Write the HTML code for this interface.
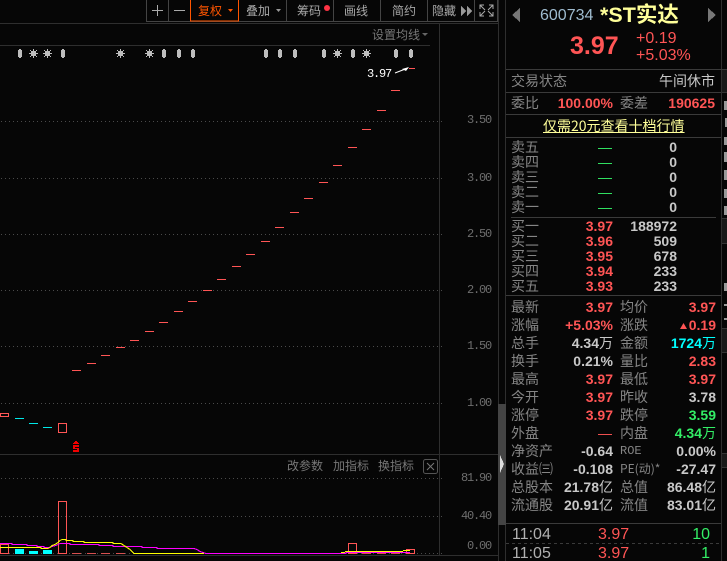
<!DOCTYPE html>
<html lang="zh"><head><meta charset="utf-8"><title>600734</title>
<style>
html,body{margin:0;padding:0;width:727px;height:561px;overflow:hidden;background:#060606}
body{position:relative;font-family:"Liberation Sans","WenQuanYi Zen Hei","Noto Sans CJK SC",sans-serif}
svg{position:absolute;left:0;top:0}
.t{position:absolute;white-space:nowrap;line-height:16px;height:16px;font-size:14px}
.c{font-family:"WenQuanYi Zen Hei","Noto Sans CJK SC",sans-serif;font-weight:normal}
.l{color:#858585;left:511px;font-family:"WenQuanYi Zen Hei","Noto Sans CJK SC",sans-serif}
.m{color:#858585;left:620px;font-family:"WenQuanYi Zen Hei","Noto Sans CJK SC",sans-serif}
.v{font-weight:bold;font-size:14px}
.r{color:#ff5555}.w{color:#c8c8c8}.g{color:#33ee66}.y{color:#ffff99}.b{color:#00ffff}
.a{color:#6e6e6e;font-family:"Liberation Mono",monospace;font-size:12px;letter-spacing:-1.2px;left:460px;width:31px;text-align:right}
.k{color:#a8a8a8;font-size:12px;top:3px;font-family:"WenQuanYi Zen Hei","Noto Sans CJK SC",sans-serif}
.s{color:#777;font-size:12px;font-family:"WenQuanYi Zen Hei","Noto Sans CJK SC",sans-serif}
</style></head><body>
<svg width="727" height="561" viewBox="0 0 727 561" shape-rendering="crispEdges">
<!-- chart frame -->
<g fill="#2e2e2e">
<rect x="0" y="23" width="498" height="1"/><rect x="0" y="45" width="430" height="1"/>
<rect x="0" y="454" width="498" height="1"/><rect x="0" y="555" width="498" height="1"/>
<rect x="439" y="23" width="1" height="532"/>
<rect x="498" y="0" width="1" height="561"/><rect x="505" y="0" width="1" height="561"/>
<rect x="721" y="0" width="1" height="561"/>
</g>
<!-- grid -->
<g stroke="#4a4a4a" stroke-dasharray="1 3" stroke-width="1">
<path d="M1 121.500H443M1 178.500H443M1 234.500H443M1 290.500H443M1 346.500H443M1 403.500H443M1 478.500H443M1 516.500H443M1 553.500H443"/>
</g>
<!-- toolbar -->
<g fill="none" stroke="#444">
<path d="M146.500 0V21.500H498M168.500 0V21M286.500 0V21M333.500 0V21M380.500 0V21M427.500 0V21M474.500 0V21M497.500 0V21"/>
</g>
<rect x="190.500" y="-2" width="48" height="23" fill="#060606" stroke="#ff5500"/>
<path d="M152 10.500h11M157.500 5v11" stroke="#aaa" fill="none"/>
<path d="M174 10.500h11" stroke="#aaa" fill="none"/>
<path d="M228 9h5l-2.500 3z" fill="#ff5500" shape-rendering="auto"/>
<path d="M276 9h5l-2.500 3z" fill="#999" shape-rendering="auto"/>
<circle cx="327" cy="8" r="3" fill="#ff3344" shape-rendering="auto"/>
<path d="M461 6v10l5-5zM467 6v10l5-5z" fill="#999"/>
<path d="M480 9V5h4M480 5l5 5M493 9V5h-4M493 5l-5 5M480 12v4h4M480 16l5-5M493 12v4h-4M493 16l-5-5" stroke="#aaa" fill="none" shape-rendering="auto"/>
<path d="M422 33h6l-3 3z" fill="#666" shape-rendering="auto"/>
<!-- markers -->
<g fill="#bdbdbd">
<path d="M18 50h1v-1h2v1h1v7h-1v1h-2v-1h-1zM61 50h1v-1h2v1h1v7h-1v1h-2v-1h-1zM162 50h1v-1h2v1h1v7h-1v1h-2v-1h-1zM177 50h1v-1h2v1h1v7h-1v1h-2v-1h-1zM191 50h1v-1h2v1h1v7h-1v1h-2v-1h-1zM264 50h1v-1h2v1h1v7h-1v1h-2v-1h-1zM278 50h1v-1h2v1h1v7h-1v1h-2v-1h-1zM293 50h1v-1h2v1h1v7h-1v1h-2v-1h-1zM322 50h1v-1h2v1h1v7h-1v1h-2v-1h-1zM351 50h1v-1h2v1h1v7h-1v1h-2v-1h-1zM394 50h1v-1h2v1h1v7h-1v1h-2v-1h-1zM409 50h1v-1h2v1h1v7h-1v1h-2v-1h-1z"/>
<path d="M31 51h5v5h-5zM33 49h1v9h-1zM29 53h9v1h-9zM30 50h1v1h-1zM36 50h1v1h-1zM30 56h1v1h-1zM36 56h1v1h-1z"/>
<path d="M45 51h5v5h-5zM47 49h1v9h-1zM43 53h9v1h-9zM44 50h1v1h-1zM50 50h1v1h-1zM44 56h1v1h-1zM50 56h1v1h-1z"/>
<path d="M118 51h5v5h-5zM120 49h1v9h-1zM116 53h9v1h-9zM117 50h1v1h-1zM123 50h1v1h-1zM117 56h1v1h-1zM123 56h1v1h-1z"/>
<path d="M147 51h5v5h-5zM149 49h1v9h-1zM145 53h9v1h-9zM146 50h1v1h-1zM152 50h1v1h-1zM146 56h1v1h-1zM152 56h1v1h-1z"/>
<path d="M335 51h5v5h-5zM337 49h1v9h-1zM333 53h9v1h-9zM334 50h1v1h-1zM340 50h1v1h-1zM334 56h1v1h-1zM340 56h1v1h-1z"/>
<path d="M364 51h5v5h-5zM366 49h1v9h-1zM362 53h9v1h-9zM363 50h1v1h-1zM369 50h1v1h-1zM363 56h1v1h-1zM369 56h1v1h-1z"/>
</g>
<!-- price dashes -->
<g fill="#ff5555">
<rect x="72" y="370" width="9" height="1"/><rect x="87" y="363" width="9" height="1"/><rect x="101" y="355" width="9" height="1"/><rect x="116" y="347" width="9" height="1"/><rect x="130" y="340" width="9" height="1"/><rect x="145" y="331" width="9" height="1"/><rect x="159" y="322" width="9" height="1"/><rect x="174" y="311" width="9" height="1"/><rect x="188" y="301" width="9" height="1"/><rect x="203" y="290" width="9" height="1"/><rect x="217" y="279" width="9" height="1"/><rect x="232" y="266" width="9" height="1"/><rect x="246" y="254" width="9" height="1"/><rect x="261" y="241" width="9" height="1"/><rect x="275" y="227" width="9" height="1"/><rect x="290" y="212" width="9" height="1"/><rect x="304" y="198" width="9" height="1"/><rect x="319" y="182" width="9" height="1"/><rect x="333" y="165" width="9" height="1"/><rect x="348" y="147" width="9" height="1"/><rect x="362" y="129" width="9" height="1"/><rect x="377" y="110" width="9" height="1"/><rect x="391" y="90" width="9" height="1"/><rect x="409" y="68" width="6" height="1"/>
</g>
<path d="M395 73l13-5" stroke="#fff" fill="none" shape-rendering="auto"/><path d="M402 69l7-2-3 4z" fill="#fff" shape-rendering="auto"/>
<g fill="none" stroke="#ff5555">
<rect x="0.500" y="413.500" width="8" height="3"/><rect x="58.500" y="423.500" width="8" height="9"/>
<rect x="0.500" y="544.500" width="8" height="9"/><rect x="58.500" y="501.500" width="8" height="52"/>
<rect x="348.500" y="543.500" width="8" height="10"/><rect x="406.500" y="549.500" width="8" height="4"/>
</g>
<g fill="#00e8e8"><rect x="15" y="418" width="9" height="1"/><rect x="29" y="423" width="9" height="1"/><rect x="43" y="427" width="9" height="1"/></g>
<g fill="#00ffff"><rect x="15" y="549" width="9" height="5"/><rect x="29" y="551" width="9" height="3"/><rect x="43" y="550" width="9" height="4"/></g>
<g fill="#d85050"><rect x="72" y="553" width="9" height="1"/><rect x="87" y="553" width="9" height="1"/><rect x="101" y="553" width="9" height="1"/><rect x="116" y="553" width="9" height="1"/><rect x="362" y="553" width="9" height="1"/><rect x="377" y="553" width="9" height="1"/><rect x="391" y="553" width="9" height="1"/></g>
<!-- S marker -->
<path d="M75 441h2v1h1v1h1v1h-6v-1h1v-1h1zM73 445h6v2h-4v1h4v4h-6v-2h4v-1h-4z" fill="#f00000"/>
<!-- MA lines -->
<path d="M0 543.500H12V544.500H27V545.500H37V546.500H44V547.500H49L52 546.500 56 545.500 60 543.500H70V544.500H99V545.500H113V546.500H142V547.500H157V548.500H194L197 549.500 200 551.500 203 552.500 206 553.500H346V552.500H410" stroke="#ff00ff" fill="none"/>
<path d="M0 547.500H41V548.500H48L50 547.500 52 545.500 55 544.500 58 542.500 60 540.500 62 539.500H66V540.500H73V541.500H84V542.500H113V543.500H121L124 545.500 127 547.500 130 549.500 133 552.500 134 553.500H204M341 552.500H345M403 550.500H410" stroke="#ffff00" fill="none"/>
<path d="M345 551.500H403" stroke="#ffff00" fill="none"/>
<rect x="423.500" y="459.500" width="14" height="14" rx="2" stroke="#555" fill="none" shape-rendering="auto"/>
<path d="M427 463l7 7M434 463l-7 7" stroke="#777" fill="none" shape-rendering="auto"/>
<!-- splitter -->
<rect x="498" y="404" width="8" height="121" fill="#444"/>
<rect x="499" y="525" width="6" height="36" fill="#060606"/>
<path d="M500 455l4 9-4 9z" fill="#ddd"/>
<!-- quote frame -->
<g fill="#3a3a3a">
<rect x="506" y="69" width="221" height="1"/><rect x="506" y="92" width="215" height="1"/><rect x="506" y="114" width="215" height="1"/><rect x="506" y="137" width="215" height="1"/>
<rect x="511" y="217" width="205" height="1"/><rect x="506" y="295" width="215" height="1"/><rect x="506" y="523" width="215" height="1"/>
</g>
<path d="M506 543.500H721" stroke="#3a3a3a" stroke-dasharray="3 3" fill="none"/>
<!-- header arrows -->
<path d="M520 8v14l-8-7z" fill="#777"/><path d="M708 8v14l8-7z" fill="#777"/>
<!-- rise triangle -->
<path d="M683.500 323l3.500 6h-7z" fill="#ff5555" shape-rendering="auto"/>
<!-- right strip -->
<g fill="#181818"><rect x="722" y="70" width="5" height="22"/><rect x="722" y="219" width="5" height="24"/><rect x="722" y="329" width="5" height="23"/><rect x="722" y="454" width="5" height="13"/></g>
<g fill="#333"><rect x="722" y="92" width="5" height="1"/><rect x="722" y="218" width="5" height="1"/><rect x="722" y="243" width="5" height="1"/><rect x="722" y="328" width="5" height="1"/><rect x="722" y="352" width="5" height="1"/><rect x="722" y="453" width="5" height="1"/><rect x="722" y="467" width="5" height="1"/></g>
<g fill="#999"><rect x="724" y="101" width="3" height="9"/><rect x="725" y="118" width="2" height="9"/><rect x="724" y="137" width="3" height="8"/><rect x="724" y="152" width="3" height="10"/><rect x="724" y="170" width="3" height="10"/><rect x="724" y="189" width="3" height="9"/><rect x="724" y="206" width="3" height="9"/><rect x="724" y="283" width="3" height="8"/><rect x="724" y="304" width="3" height="2"/><rect x="724" y="318" width="3" height="2"/></g>
</svg>

<!-- toolbar text -->
<div class="t k" style="left:198px;color:#ff5500">复权</div>
<div class="t k" style="left:246px">叠加</div>
<div class="t k" style="left:297px">筹码</div>
<div class="t k" style="left:344px">画线</div>
<div class="t k" style="left:392px">简约</div>
<div class="t k" style="left:432px">隐藏</div>
<div class="t s" style="left:372px;top:27px">设置均线</div>
<div class="t s" style="left:287px;top:458px">改参数</div>
<div class="t s" style="left:333px;top:458px">加指标</div>
<div class="t s" style="left:378px;top:458px">换指标</div>
<!-- axis -->
<div class="t a" style="top:112px">3.50</div>
<div class="t a" style="top:170px">3.00</div>
<div class="t a" style="top:226px">2.50</div>
<div class="t a" style="top:282px">2.00</div>
<div class="t a" style="top:338px">1.50</div>
<div class="t a" style="top:395px">1.00</div>
<div class="t a" style="top:470px">81.90</div>
<div class="t a" style="top:508px">40.40</div>
<div class="t a" style="top:538px">0.00</div>
<div class="t a" style="top:66px;left:360px;color:#fff">3.97</div>
<!-- header -->
<div class="t" style="left:540px;top:8px;font-size:16px;color:#9fbcd0">600734</div>
<div class="t" style="left:600px;top:6px;font-size:21.500px;font-weight:bold;color:#ffff99;line-height:18px;height:18px">*ST实达</div>
<div class="t" style="left:570px;top:32px;font-size:25px;font-weight:bold;color:#ff5555;line-height:28px;height:28px">3.97</div>
<div class="t r" style="left:636px;top:31px;font-size:16px">+0.19</div>
<div class="t r" style="left:636px;top:48px;font-size:16px">+5.03%</div>
<!-- status -->
<div class="t l" style="top:73px">交易状态</div>
<div class="t c" style="right:12px;top:73px;color:#c8c8c8">午间休市</div>
<div class="t l" style="top:95px">委比</div>
<div class="t v r" style="right:114px;top:95px">100.00%</div>
<div class="t m" style="top:95px">委差</div>
<div class="t v r" style="right:12px;top:95px">190625</div>
<div class="t y c" style="left:543px;top:118px;text-decoration:underline">仅需20元查看十档行情</div>
<!-- asks -->
<div class="t l" style="top:139px">卖五</div><div class="t l" style="top:154px">卖四</div><div class="t l" style="top:169px">卖三</div><div class="t l" style="top:184px">卖二</div><div class="t l" style="top:199px">卖一</div>
<div class="t g" style="left:598px;top:139px">—</div><div class="t g" style="left:598px;top:154px">—</div><div class="t g" style="left:598px;top:169px">—</div><div class="t g" style="left:598px;top:184px">—</div><div class="t g" style="left:598px;top:199px">—</div>
<div class="t v w" style="right:50px;top:139px">0</div><div class="t v w" style="right:50px;top:154px">0</div><div class="t v w" style="right:50px;top:169px">0</div><div class="t v w" style="right:50px;top:184px">0</div><div class="t v w" style="right:50px;top:199px">0</div>
<!-- bids -->
<div class="t l" style="top:218px">买一</div><div class="t l" style="top:233px">买二</div><div class="t l" style="top:248px">买三</div><div class="t l" style="top:263px">买四</div><div class="t l" style="top:278px">买五</div>
<div class="t v r" style="right:114px;top:218px">3.97</div><div class="t v r" style="right:114px;top:233px">3.96</div><div class="t v r" style="right:114px;top:248px">3.95</div><div class="t v r" style="right:114px;top:263px">3.94</div><div class="t v r" style="right:114px;top:278px">3.93</div>
<div class="t v w" style="right:50px;top:218px">188972</div><div class="t v w" style="right:50px;top:233px">509</div><div class="t v w" style="right:50px;top:248px">678</div><div class="t v w" style="right:50px;top:263px">233</div><div class="t v w" style="right:50px;top:278px">233</div>
<!-- stats -->
<div class="t l" style="top:299px">最新</div><div class="t v r" style="right:114px;top:299px">3.97</div><div class="t m" style="top:299px">均价</div><div class="t v r" style="right:11px;top:299px">3.97</div>
<div class="t l" style="top:317px">涨幅</div><div class="t v r" style="right:114px;top:317px">+5.03%</div><div class="t m" style="top:317px">涨跌</div><div class="t v r" style="right:11px;top:317px">0.19</div>
<div class="t l" style="top:335px">总手</div><div class="t v w" style="right:114px;top:335px">4.34<span class="c">万</span></div><div class="t m" style="top:335px">金额</div><div class="t v b" style="right:11px;top:335px">1724<span class="c">万</span></div>
<div class="t l" style="top:353px">换手</div><div class="t v w" style="right:114px;top:353px">0.21%</div><div class="t m" style="top:353px">量比</div><div class="t v r" style="right:11px;top:353px">2.83</div>
<div class="t l" style="top:371px">最高</div><div class="t v r" style="right:114px;top:371px">3.97</div><div class="t m" style="top:371px">最低</div><div class="t v r" style="right:11px;top:371px">3.97</div>
<div class="t l" style="top:389px">今开</div><div class="t v r" style="right:114px;top:389px">3.97</div><div class="t m" style="top:389px">昨收</div><div class="t v w" style="right:11px;top:389px">3.78</div>
<div class="t l" style="top:407px">涨停</div><div class="t v r" style="right:114px;top:407px">3.97</div><div class="t m" style="top:407px">跌停</div><div class="t v g" style="right:11px;top:407px">3.59</div>
<div class="t l" style="top:425px">外盘</div><div class="t r" style="left:598px;top:425px">—</div><div class="t m" style="top:425px">内盘</div><div class="t v g" style="right:11px;top:425px">4.34<span class="c">万</span></div>
<div class="t l" style="top:443px">净资产</div><div class="t v w" style="right:114px;top:443px">-0.64</div><div class="t m" style="top:443px;font-family:'Liberation Mono',monospace;font-size:12px">ROE</div><div class="t v w" style="right:11px;top:443px">0.00%</div>
<div class="t l" style="top:461px">收益㈢</div><div class="t v w" style="right:114px;top:461px">-0.108</div><div class="t m" style="top:461px;font-size:12px">PE(动)*</div><div class="t v w" style="right:11px;top:461px">-27.47</div>
<div class="t l" style="top:479px">总股本</div><div class="t v w" style="right:114px;top:479px">21.78<span class="c">亿</span></div><div class="t m" style="top:479px">总值</div><div class="t v w" style="right:11px;top:479px">86.48<span class="c">亿</span></div>
<div class="t l" style="top:497px">流通股</div><div class="t v w" style="right:114px;top:497px">20.91<span class="c">亿</span></div><div class="t m" style="top:497px">流值</div><div class="t v w" style="right:11px;top:497px">83.01<span class="c">亿</span></div>
<!-- ticks -->
<div class="t w" style="left:512px;top:527px;font-size:16px;color:#b0b0b0">11:04</div><div class="t r" style="left:598px;top:527px;font-size:16px">3.97</div><div class="t g" style="right:17px;top:527px;font-size:16px">10</div>
<div class="t w" style="left:512px;top:546px;font-size:16px;color:#b0b0b0">11:05</div><div class="t r" style="left:598px;top:546px;font-size:16px">3.97</div><div class="t g" style="right:17px;top:546px;font-size:16px">1</div>
</body></html>
